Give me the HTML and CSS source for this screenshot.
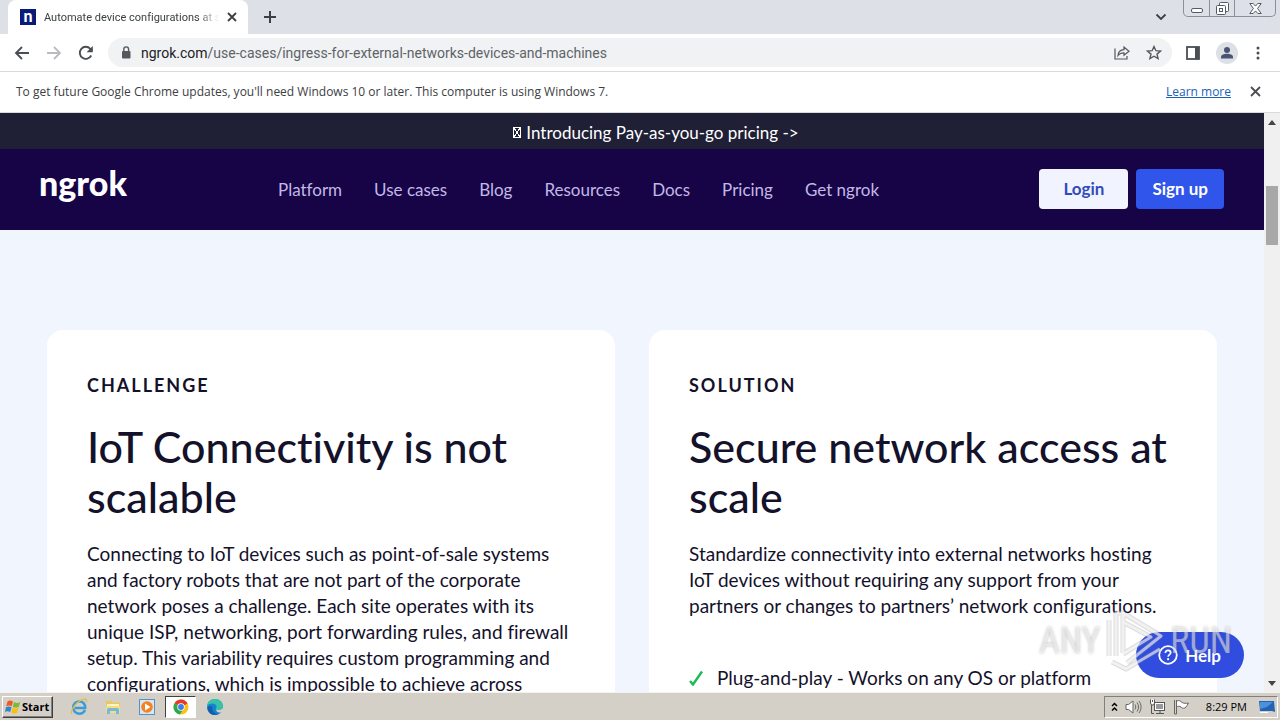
FILE: index.html
```html
<!DOCTYPE html>
<html lang="en">
<head>
  <meta charset="UTF-8">
  <meta name="viewport" content="width=device-width, initial-scale=1.0">
  <title>Automate device configurations at scale</title>
  <link rel="stylesheet" href="styles.css">
</head>
<body>

<header class="browser">
  <div class="tabstrip">
    <div class="tab">
      <span class="favicon">n</span>
      <span class="tab-title">Automate device configurations at scale</span>
      <button class="icon-btn" aria-label="Close tab">
        <svg width="10" height="10" viewBox="0 0 10 10"><path d="M1 1l8 8M9 1L1 9" stroke="#3c4043" stroke-width="1.8"/></svg>
      </button>
    </div>
    <button class="icon-btn new-tab" aria-label="New tab">
      <svg width="12" height="12" viewBox="0 0 12 12"><path d="M6 0v12M0 6h12" stroke="#3c4043" stroke-width="2"/></svg>
    </button>
    <button class="icon-btn tab-search" aria-label="Search tabs">
      <svg width="12" height="8" viewBox="0 0 12 8"><path d="M1.500 1.500L6 6l4.500-4.500" fill="none" stroke="#3c4043" stroke-width="1.800"/></svg>
    </button>
    <div class="window-buttons">
      <button class="win-min" aria-label="Minimize">
        <svg width="12" height="5" viewBox="0 0 12 5"><rect x=".5" y=".5" width="11" height="4" rx="1.500" fill="#fff" stroke="#555b66"/></svg>
      </button>
      <button class="win-max" aria-label="Restore">
        <svg width="13" height="13" viewBox="0 0 13 13" fill="#fff" stroke="#555b66"><rect x="3.500" y=".5" width="9" height="9" rx="1"/><rect x=".5" y="3.500" width="9" height="9" rx="1"/><rect x="3.500" y="6.500" width="3" height="3"/></svg>
      </button>
      <button class="win-close" aria-label="Close">
        <svg width="13" height="11" viewBox="0 0 13 11"><path d="M.8.500h3.400l2.300 2.600L8.800.5h3.400L8.600 5.500l3.600 5H8.800L6.500 7.900l-2.300 2.600H.8l3.600-5z" fill="#fff" stroke="#555b66"/></svg>
      </button>
    </div>
  </div>

  <div class="toolbar">
    <button class="icon-btn" aria-label="Back">
      <svg width="16" height="14" viewBox="0 0 16 14"><path d="M15 7H2M8 1L2 7l6 6" fill="none" stroke="#4a4d51" stroke-width="1.800"/></svg>
    </button>
    <button class="icon-btn" aria-label="Forward">
      <svg width="16" height="14" viewBox="0 0 16 14"><path d="M1 7h13M8 1l6 6-6 6" fill="none" stroke="#b9bbbe" stroke-width="1.800"/></svg>
    </button>
    <button class="icon-btn" aria-label="Reload">
      <svg width="16" height="16" viewBox="0 0 16 16"><path d="M13.200 10.500A6 6 0 1 1 12.300 3.800L14 5.500" fill="none" stroke="#4a4d51" stroke-width="1.900"/><path d="M14.800 1v6.200H8.600z" fill="#4a4d51"/></svg>
    </button>
    <div class="omnibox">
      <svg width="10" height="13" viewBox="0 0 10 13"><rect x="1" y="5" width="8.500" height="7.500" rx="1" fill="#55585c"/><path d="M2.800 5V3.300a2.400 2.400 0 0 1 4.800 0V5" fill="none" stroke="#55585c" stroke-width="1.400"/></svg>
      <span class="url"><b>ngrok.com</b>/use-cases/ingress-for-external-networks-devices-and-machines</span>
      <button class="icon-btn" aria-label="Share">
        <svg width="16" height="15" viewBox="0 0 16 15" fill="none" stroke="#55585c" stroke-width="1.200"><path d="M1 3.500v10.500h12v-3"/><path d="M4 10.500C4.300 7 6.500 4.800 10 4.700V2l5 4.200-5 4.100V7.800C7.300 7.800 5.500 8.500 4 10.500z"/></svg>
      </button>
      <button class="icon-btn" aria-label="Bookmark this page">
        <svg width="16" height="15" viewBox="0 0 16 15"><path d="M8 1.500l1.900 4.200 4.600.4-3.500 3 1.100 4.500L8 11.200l-4.100 2.400L5 9.100l-3.500-3 4.600-.4z" fill="none" stroke="#55585c" stroke-width="1.400"/></svg>
      </button>
    </div>
    <button class="icon-btn" aria-label="Side panel">
      <svg width="14" height="14" viewBox="0 0 14 14"><rect x="1" y="1" width="12" height="12" fill="none" stroke="#4a4d51" stroke-width="1.800"/><path d="M9 1h4v12H9z" fill="#4a4d51"/></svg>
    </button>
    <button class="icon-btn" aria-label="Profile">
      <svg width="22" height="22" viewBox="0 0 22 22"><circle cx="11" cy="11" r="11" fill="#dde1e6"/><circle cx="11" cy="8" r="3" fill="#4a5575"/><path d="M5 16.500v-1.500c0-2 3-3.200 6-3.200s6 1.200 6 3.200v1.500z" fill="#4a5575"/></svg>
    </button>
    <button class="icon-btn" aria-label="Menu">
      <svg width="8" height="14" viewBox="0 0 8 14" fill="#4a4d51"><circle cx="4" cy="2" r="1.500"/><circle cx="4" cy="7" r="1.500"/><circle cx="4" cy="12" r="1.500"/></svg>
    </button>
  </div>

  <div class="infobar">
    <p>To get future Google Chrome updates, you'll need Windows 10 or later. This computer is using Windows 7.</p>
    <a href="#">Learn more</a>
    <button class="icon-btn" aria-label="Dismiss">
      <svg width="11" height="11" viewBox="0 0 11 11"><path d="M1 1l9 9M10 1l-9 9" stroke="#4a4d51" stroke-width="1.800"/></svg>
    </button>
  </div>
</header>

<div class="viewport">
  <div class="page">
    <a class="announcement" href="#"><span class="tofu"></span> Introducing Pay-as-you-go pricing -&gt;</a>

    <div class="site-nav">
      <a class="logo" href="#">ngrok</a>
      <nav class="nav-links">
        <a href="#">Platform</a>
        <a href="#">Use cases</a>
        <a href="#">Blog</a>
        <a href="#">Resources</a>
        <a href="#">Docs</a>
        <a href="#">Pricing</a>
        <a href="#">Get ngrok</a>
      </nav>
      <div class="nav-actions">
        <a class="btn btn-light" href="#">Login</a>
        <a class="btn btn-primary" href="#">Sign up</a>
      </div>
    </div>

    <main class="cards">
      <section class="card">
        <h3>CHALLENGE</h3>
        <h2>IoT Connectivity is not<br>scalable</h2>
        <p>Connecting to IoT devices such as point-of-sale systems<br>and factory robots that are not part of the corporate<br>network poses a challenge. Each site operates with its<br>unique ISP, networking, port forwarding rules, and firewall<br>setup. This variability requires custom programming and<br>configurations, which is impossible to achieve across</p>
      </section>
      <section class="card">
        <h3>SOLUTION</h3>
        <h2>Secure network access at<br>scale</h2>
        <p>Standardize connectivity into external networks hosting<br>IoT devices without requiring any support from your<br>partners or changes to partners’ network configurations.</p>
        <ul class="checks">
          <li>
            <svg width="14" height="16" viewBox="0 0 14 16"><path d="M1 11l3 3.500L13 1.500" fill="none" stroke="#1db954" stroke-width="2.400"/></svg>
            Plug-and-play - Works on any OS or platform
          </li>
        </ul>
      </section>
    </main>
  </div>

  <div class="scrollbar">
    <svg width="8" height="5" viewBox="0 0 8 5"><path d="M0 5l4-5 4 5z" fill="#444"/></svg>
    <div class="thumb"></div>
    <svg class="down" width="8" height="5" viewBox="0 0 8 5"><path d="M0 0l4 5 4-5z" fill="#444"/></svg>
  </div>

  <button class="help">
    <svg width="20" height="20" viewBox="0 0 20 20"><circle cx="10" cy="10" r="8.800" fill="none" stroke="#fff" stroke-width="1.800"/><path d="M7.300 8c0-1.700 1.200-2.700 2.700-2.700s2.700 1 2.700 2.400c0 1.900-2.600 2-2.600 4.100" fill="none" stroke="#fff" stroke-width="1.700"/><circle cx="10.100" cy="14.200" r="1.100" fill="#fff"/></svg>
    Help
  </button>

  <div class="watermark">
    <span>ANY</span>
    <svg width="58" height="62" viewBox="0 0 58 62" fill="none" stroke-linejoin="round">
      <g stroke="#777" stroke-opacity=".25" stroke-width="5">
        <path d="M3 10v36M10 46V3h7v40M17 3l38 23-34 27M17 12l28 15-28 17M6 52l14 7 34-20"/>
      </g>
      <g stroke="#fff" stroke-opacity=".6" stroke-width="3">
        <path d="M3 10v36M10 46V3h7v40M17 3l38 23-34 27M17 12l28 15-28 17M6 52l14 7 34-20"/>
      </g>
    </svg>
    <span>RUN</span>
  </div>
</div>

<footer class="taskbar">
  <button class="start">
    <svg width="16" height="16" viewBox="0 0 16 16"><path d="M2.500 2.500C4.500 1 6 1.300 8 2.500L6.700 7.300C5 6.200 3 6.200 1.200 7.300z" fill="#ef5a24"/><path d="M9 3c2 1.200 4 1.200 6.200 0l-1.400 4.700c-2 1.200-4 1.100-6 0z" fill="#7cba2e"/><path d="M1 8.300c2-1.200 3.700-1 5.500 0l-1.300 4.800c-2-1.200-3.500-1.200-5.200-.1z" fill="#2f83d4"/><path d="M7.500 8.800c2 1 4 1.100 6 0l-1.300 4.900c-2.200 1.200-4 1-6 0z" fill="#fbbd16"/></svg>
    Start
  </button>
  <div class="quick-launch">
    <button aria-label="Internet Explorer">
      <svg width="18" height="18" viewBox="0 0 18 18"><path d="M15 12c-1 2.300-3 3.700-5.700 3.700A6 6 0 0 1 3.200 9.500 6 6 0 0 1 9.300 3.400c3.600 0 6 2.600 5.900 6.600H5" fill="none" stroke="#399cda" stroke-width="2.500"/><path d="M2 16C-.5 13 6 3.500 14 1.200c2.500-.7 3 1 2 3" fill="none" stroke="#e4bb46" stroke-width="1.300"/></svg>
    </button>
    <button aria-label="Explorer">
      <svg width="18" height="18" viewBox="0 0 18 18"><path d="M2 3h6l1 1.500h7V9H2z" fill="#e8c95f"/><path d="M3 6h12v4H3z" fill="#fff4bf"/><path d="M2 8h14v7H2z" fill="#f5dc83"/><path d="M3 16v-4c0-1.500 1-2 2-2h8c1 0 2 .5 2 2v4h-3v-3H6v3z" fill="#75b9dc"/></svg>
    </button>
    <button aria-label="Media Player">
      <svg width="18" height="18" viewBox="0 0 18 18"><rect x="1.500" y="1.500" width="15" height="15" fill="#d5e7f6" stroke="#5c91c3"/><circle cx="9" cy="9" r="5.800" fill="#f58220"/><path d="M7 5.500v7l5.500-3.500z" fill="#fff"/></svg>
    </button>
    <button class="active" aria-label="Chrome">
      <svg width="16" height="16" viewBox="0 0 16 16"><circle cx="8" cy="8" r="7.500" fill="#fbc116"/><path d="M8 8L1.500 4.200A7.500 7.500 0 0 1 14.500 4.300z" fill="#e33b2e"/><path d="M1.500 4.200L8 8l1.500 3.500-2.700 3.900A7.500 7.500 0 0 1 1.500 4.200z" fill="#2da94f"/><path d="M8 4.300h6.500L8 8z" fill="#e33b2e"/><circle cx="8" cy="8" r="3.700" fill="#fff"/><circle cx="8" cy="8" r="2.900" fill="#3b7ded"/></svg>
    </button>
    <button aria-label="Edge">
      <svg width="18" height="18" viewBox="0 0 18 18"><circle cx="9" cy="9" r="8" fill="#1683d2"/><path d="M1 8C2 3 5 1 9 1c5 0 8 3.500 8 7 0 3-2.500 4-5 4-1.800 0-2.500-.8-1.800-1.800C11.500 8 9.500 5.500 6.500 5.500 4 5.500 2 6.500 1 8z" fill="#39c3a6"/><path d="M6.500 9c-.7 4 2 7 6 7C8 18.500 2 16.500 1.500 10c1-2.500 3-2.500 5-1z" fill="#1260ad"/><path d="M10.200 10.200c-.7 1 0 1.800 1.800 1.800 2 0 4-.6 4.800-2l1.200 3-3 1.500c-3 .5-5.500-1.500-4.800-4.300z" fill="#d4d0c8"/></svg>
    </button>
  </div>
  <div class="tray">
    <svg width="7" height="10" viewBox="0 0 7 10"><path d="M1 4l2.500-2.500L6 4M1 8.500L3.500 6 6 8.500" fill="none" stroke="#000" stroke-width="1.500"/></svg>
    <svg width="17" height="16" viewBox="0 0 17 16" stroke="#666"><path d="M1 5.500h2.500L8 2v12l-4.500-3.500H1z" fill="#fff"/><path d="M10 5.500c1 1.500 1 3.500 0 5M12 3.500c2 2.500 2 6.500 0 9M14 2c2.700 3.500 2.700 8.500 0 12" fill="none"/></svg>
    <svg width="17" height="16" viewBox="0 0 17 16" stroke="#555"><rect x="5.500" y="3.500" width="10" height="8" fill="#fff"/><path d="M7 5h7v5H7z" fill="#999" stroke="none"/><path d="M7 14.500h8M11 12v2M2.500 6v8.500H5" fill="none"/><path d="M1.500.5V4l1 2h2l1-2V.5M3.500 1v2" fill="#fff"/></svg>
    <svg width="17" height="16" viewBox="0 0 17 16" stroke="#666"><path d="M1.500 1v14M3.500 1v14M1.500 15h2" fill="none"/><path d="M3.500 2c3-1 4 0 5.500 1.500 2 1 4 1 6.500.5-1 2-2 3.500-3.500 5-2 .5-3 0-4-1-1.500-1-3-1-4.500 0z" fill="#fff"/></svg>
    <time class="clock">8:29 PM</time>
    <svg width="16" height="14" viewBox="0 0 16 14"><path d="M0 1h15l1 11-3-1H1z" fill="#2263b5"/><path d="M1 2h13L8 7 1 9z" fill="#4c91dc"/><path d="M1 12h8v1H1z" fill="#fff"/></svg>
  </div>
</footer>

</body>
</html>
```

FILE: styles.css
```css
* {
  box-sizing: border-box;
  margin: 0;
  padding: 0;
}

body {
  display: flex;
  flex-direction: column;
  height: 100vh;
  overflow: hidden;
  background: #f1f5fd;
  color: #14112b;
  font-family: Lato, sans-serif;
  font-variant-ligatures: none;
}

button {
  border: 0;
  background: none;
  font: inherit;
  cursor: pointer;
}

svg {
  display: block;
  flex-shrink: 0;
}

a {
  color: inherit;
  text-decoration: none;
}

/* Browser chrome */

.browser {
  flex-shrink: 0;
  background: #fff;
  color: #3c4043;
  font-family: "Open Sans", sans-serif;
  font-size: 12px;
}

.icon-btn {
  display: flex;
  align-items: center;
  justify-content: center;
}

.tabstrip {
  display: flex;
  align-items: center;
  height: 34px;
  padding-left: 8px;
  background: #dde1e7;
}

.tab {
  display: flex;
  align-items: center;
  gap: 8px;
  width: 240px;
  height: 34px;
  padding: 0 11px 0 12px;
  background: #fff;
  border-radius: 8px 8px 0 0;
}

.favicon {
  width: 16px;
  height: 16px;
  background: #0a1a78;
  color: #fff;
  font: 900 16px/14px Lato, sans-serif;
  text-align: center;
}

.tab-title {
  flex: 1;
  overflow: hidden;
  white-space: nowrap;
  font-family: Roboto, sans-serif;
  font-size: 11px;
  mask-image: linear-gradient(to right, #000 88%, transparent);
}

.new-tab {
  margin-left: 16px;
}

.tab-search {
  margin-left: auto;
  margin-right: 16px;
}

.window-buttons {
  display: flex;
  align-self: flex-start;
  height: 17px;
  margin-right: 4px;
  border: 1px solid #8a9099;
  border-top: 0;
  border-radius: 0 0 5px 5px;
}

.window-buttons button {
  display: flex;
  align-items: center;
  justify-content: center;
  width: 25px;
}

.window-buttons .win-min {
  align-items: flex-end;
  padding-bottom: 3px;
}

.window-buttons .win-close {
  width: 41px;
}

.window-buttons button + button {
  border-left: 1px solid #8a9099;
}

.toolbar {
  display: flex;
  align-items: center;
  gap: 16px;
  height: 38px;
  padding: 0 18px 0 14px;
  border-bottom: 1px solid #d9dadc;
}

.omnibox {
  flex: 1;
  display: flex;
  align-items: center;
  gap: 16px;
  height: 29px;
  margin-right: -2px;
  margin-left: -2px;
  padding: 0 10px 0 13px;
  background: #f0f2f4;
  border-radius: 15px;
}

.url {
  flex: 1;
  margin-left: -6px;
  white-space: nowrap;
  font-family: Roboto, sans-serif;
  font-size: 14px;
  color: #5f6368;
}

.url b {
  font-weight: normal;
  color: #202124;
}

.infobar {
  display: flex;
  align-items: center;
  height: 41px;
  padding: 0 19px 2px 16px;
  border-bottom: 1px solid #d9dadc;
}

.infobar a {
  margin-left: auto;
  margin-right: 19px;
  color: #1a62b5;
  text-decoration: underline;
}

/* Page */

.viewport {
  flex: 1;
  display: flex;
  min-height: 0;
  position: relative;
}

.page {
  flex: 1;
  overflow: hidden;
}

.announcement {
  display: flex;
  align-items: center;
  justify-content: center;
  gap: 5px;
  height: 36px;
  padding-top: 3px;
  padding-left: 48px;
  background: #1f1f35;
  color: #fff;
  font-size: 17px;
}

.tofu {
  width: 8px;
  height: 11px;
  border: 1px solid #fff;
  background: linear-gradient(55deg, transparent 44%, #fff 45% 55%, transparent 56%), linear-gradient(-55deg, transparent 44%, #fff 45% 55%, transparent 56%);
}

.site-nav {
  display: flex;
  align-items: center;
  height: 81px;
  padding: 0 40px 1px 39px;
  background: #160447;
}

.logo {
  width: 239px;
  padding-bottom: 12px;
  color: #fff;
  font-size: 34px;
  font-weight: 900;
  line-height: 40px;
}

.nav-links {
  display: flex;
  gap: 32px;
  color: #c3b8e6;
  font-size: 17px;
}

.nav-actions {
  display: flex;
  gap: 8px;
  margin-left: auto;
}

.btn {
  padding: 0 16px;
  border-radius: 4px;
  font-size: 17px;
  font-weight: bold;
  line-height: 40px;
}

.btn-light {
  padding: 0 24px;
  background: #f1f4ff;
  color: #314bbb;
}

.btn-primary {
  background: #2f55ea;
  color: #fff;
}

.cards {
  display: grid;
  grid-template-columns: 1fr 1fr;
  gap: 34px;
  padding: 100px 47px;
}

.card {
  padding: 40px;
  background: #fff;
  border-radius: 16px;
  white-space: nowrap;
}

.card h3 {
  font-size: 18px;
  line-height: 30px;
  letter-spacing: 2px;
}

.card h2 {
  margin: 22px 0 19px;
  font-size: 43px;
  font-weight: 500;
  line-height: 50px;
}

.card p,
.checks {
  font-size: 19px;
  line-height: 26px;
}

.checks {
  margin-top: 46px;
  list-style: none;
}

.checks li {
  display: flex;
  align-items: center;
  gap: 14px;
}

.scrollbar {
  display: flex;
  flex-direction: column;
  align-items: center;
  width: 16px;
  padding: 7px 0 6px;
  background: #f0f0f0;
}

.thumb {
  width: 12px;
  height: 59px;
  margin-top: 61px;
  background: #a8a8a8;
}

.scrollbar .down {
  margin-top: auto;
}

.help {
  position: absolute;
  right: 36px;
  bottom: 14px;
  display: flex;
  align-items: center;
  gap: 7px;
  height: 46px;
  padding: 0 23px 0 22px;
  border-radius: 23px;
  background: #304de0;
  color: #fff;
  font-size: 17px;
  font-weight: bold;
}

.watermark {
  position: absolute;
  right: 48px;
  bottom: 20px;
  display: flex;
  align-items: center;
  gap: 6px;
  color: rgba(255, 255, 255, 0.5);
  font-family: "Roboto Condensed", "Open Sans Condensed", "DejaVu Sans Condensed", sans-serif;
  font-size: 36px;
  line-height: 60px;
  text-shadow: 0 0 3px rgba(90, 90, 90, 0.4);
  pointer-events: none;
}

/* Taskbar */

.taskbar {
  flex-shrink: 0;
  display: flex;
  align-items: center;
  height: 28px;
  padding: 2px;
  border-top: 1px solid #f4f2ee;
  background: #d4d0c8;
  color: #000;
  font-family: "Open Sans", sans-serif;
  font-size: 12px;
}

.start {
  display: flex;
  align-items: center;
  gap: 1px;
  height: 22px;
  padding: 0 3px 0 2px;
  border: 1px solid;
  border-color: #fff #404040 #404040 #fff;
  box-shadow: inset -1px -1px #808080;
  font-size: 11px;
  font-weight: bold;
}

.quick-launch {
  display: flex;
  gap: 3px;
  margin-left: 10px;
}

.quick-launch button {
  display: flex;
  align-items: center;
  justify-content: center;
  width: 31px;
  height: 22px;
}

.quick-launch .active {
  border: 1px solid;
  border-color: #404040 #fff #fff #404040;
  background: #fff;
}

.tray {
  display: flex;
  align-items: center;
  gap: 7px;
  height: 22px;
  margin-left: auto;
  padding: 0 2px 0 6px;
  border: 1px solid;
  border-color: #808080 #fff #fff #808080;
}

.clock {
  margin-left: 9px;
  margin-right: 5px;
  font-size: 11px;
}
```
